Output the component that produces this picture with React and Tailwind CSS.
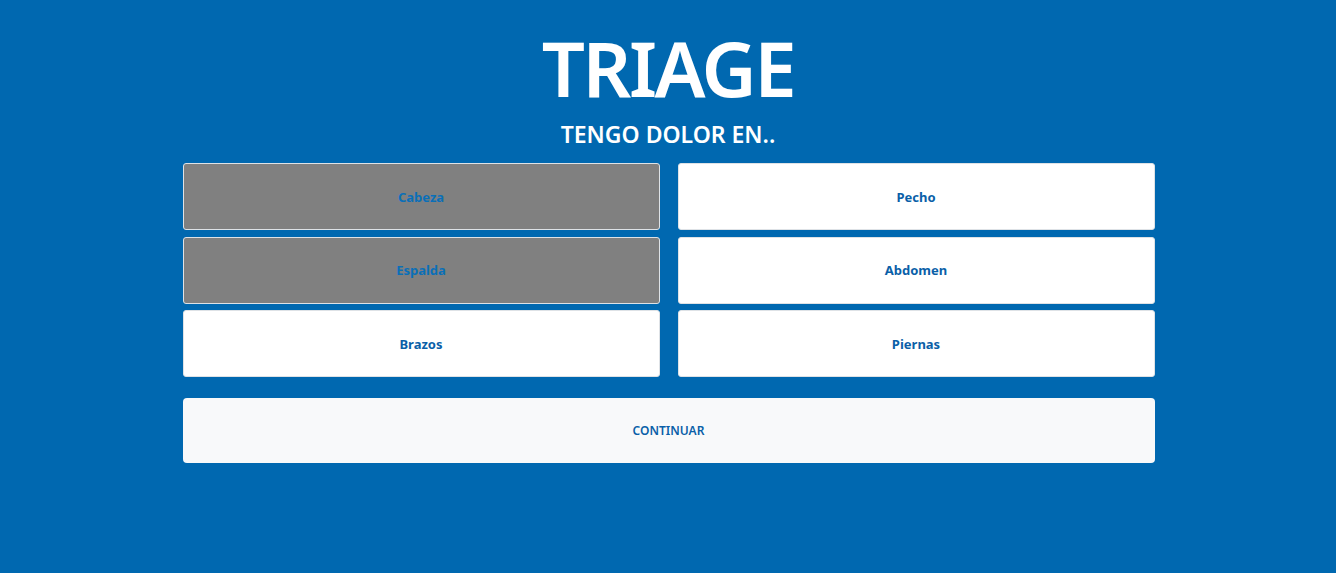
export default function App() {
  const items = [
    { label: "Cabeza", sel: true },
    { label: "Pecho", sel: false },
    { label: "Espalda", sel: true },
    { label: "Abdomen", sel: false },
    { label: "Brazos", sel: false },
    { label: "Piernas", sel: false },
  ];
  return (
    <div
      className="w-full h-[573px] bg-[#0068b0] flex flex-col items-center"
      style={{ fontFamily: '"Noto Sans", "Open Sans", sans-serif' }}
    >
      <h1 className="mt-[26px] text-white text-[76px] leading-[84px] font-semibold tracking-[-2.5px]">
        TRIAGE
      </h1>
      <h2 className="mt-[10px] text-white text-[23px] leading-[28px] font-semibold">
        TENGO DOLOR EN..
      </h2>
      <div className="mt-[15px] ml-[1px] w-[972px] grid grid-cols-2 gap-x-[18px] gap-y-[6.5px]">
        {items.map((it) =>
          it.sel ? (
            <button
              key={it.label}
              className="h-[67px] pt-[2px] rounded-[3px] border border-[#dee2e6] bg-[#808080] text-[#0a6fb8] text-[13px] font-bold"
            >
              {it.label}
            </button>
          ) : (
            <button
              key={it.label}
              className="h-[67px] pt-[2px] rounded-[3px] border border-[#dee2e6] bg-white text-[#0a5fa8] text-[13px] font-bold"
            >
              {it.label}
            </button>
          )
        )}
      </div>
      <button className="mt-[21px] ml-[1px] w-[972px] h-[65px] rounded-[4px] bg-[#f8f9fa] text-[#0a5fa8] text-[12px] font-semibold">
        CONTINUAR
      </button>
    </div>
  );
}
